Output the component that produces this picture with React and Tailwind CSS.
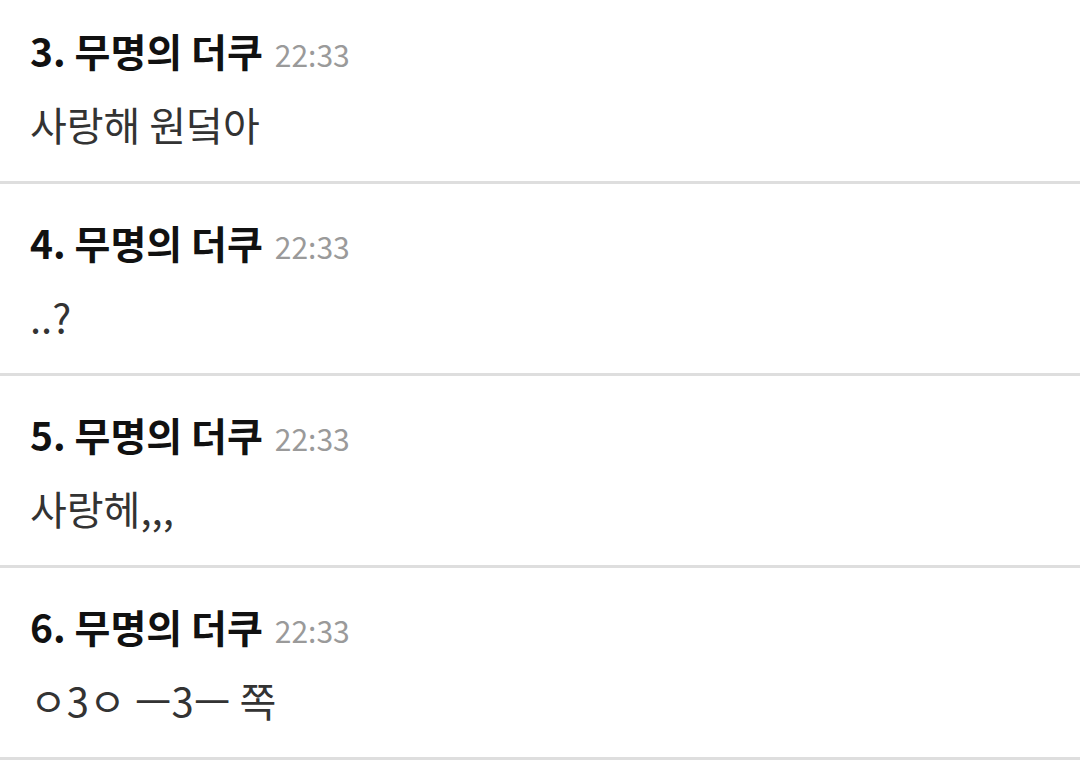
import React from 'react';

const comments = [
  { no: 3, name: '무명의 더쿠', time: '22:33', body: '사랑해 원덬아' },
  { no: 4, name: '무명의 더쿠', time: '22:33', body: '..?' },
  { no: 5, name: '무명의 더쿠', time: '22:33', body: '사랑헤,,,' },
  { no: 6, name: '무명의 더쿠', time: '22:33', body: 'ㅇ3ㅇ ㅡ3ㅡ 쪽' },
];

const CommentRow = ({ no, name, time, body }) => (
  <div className="h-[192px] border-b-[3px] border-[#dedede] px-[30px] pt-[32px]">
    <div className="flex items-baseline leading-[52px]">
      <span className="text-[39px] font-bold text-[#111]">
        {no}. {name}
      </span>
      <span className="ml-[12px] text-[30px] text-[#9a9a9a]">{time}</span>
    </div>
    <p className="mt-[18px] text-[40px] leading-[52px] text-[#333]">{body}</p>
  </div>
);

export default function App() {
  return (
    <div
      className="w-[1080px] h-[761px] overflow-hidden bg-white"
      style={{ fontFamily: '"Noto Sans CJK KR", "Noto Sans", sans-serif' }}
    >
      <div className="-mt-[8px]">
        {comments.map((c) => (
          <CommentRow key={c.no} {...c} />
        ))}
      </div>
    </div>
  );
}
